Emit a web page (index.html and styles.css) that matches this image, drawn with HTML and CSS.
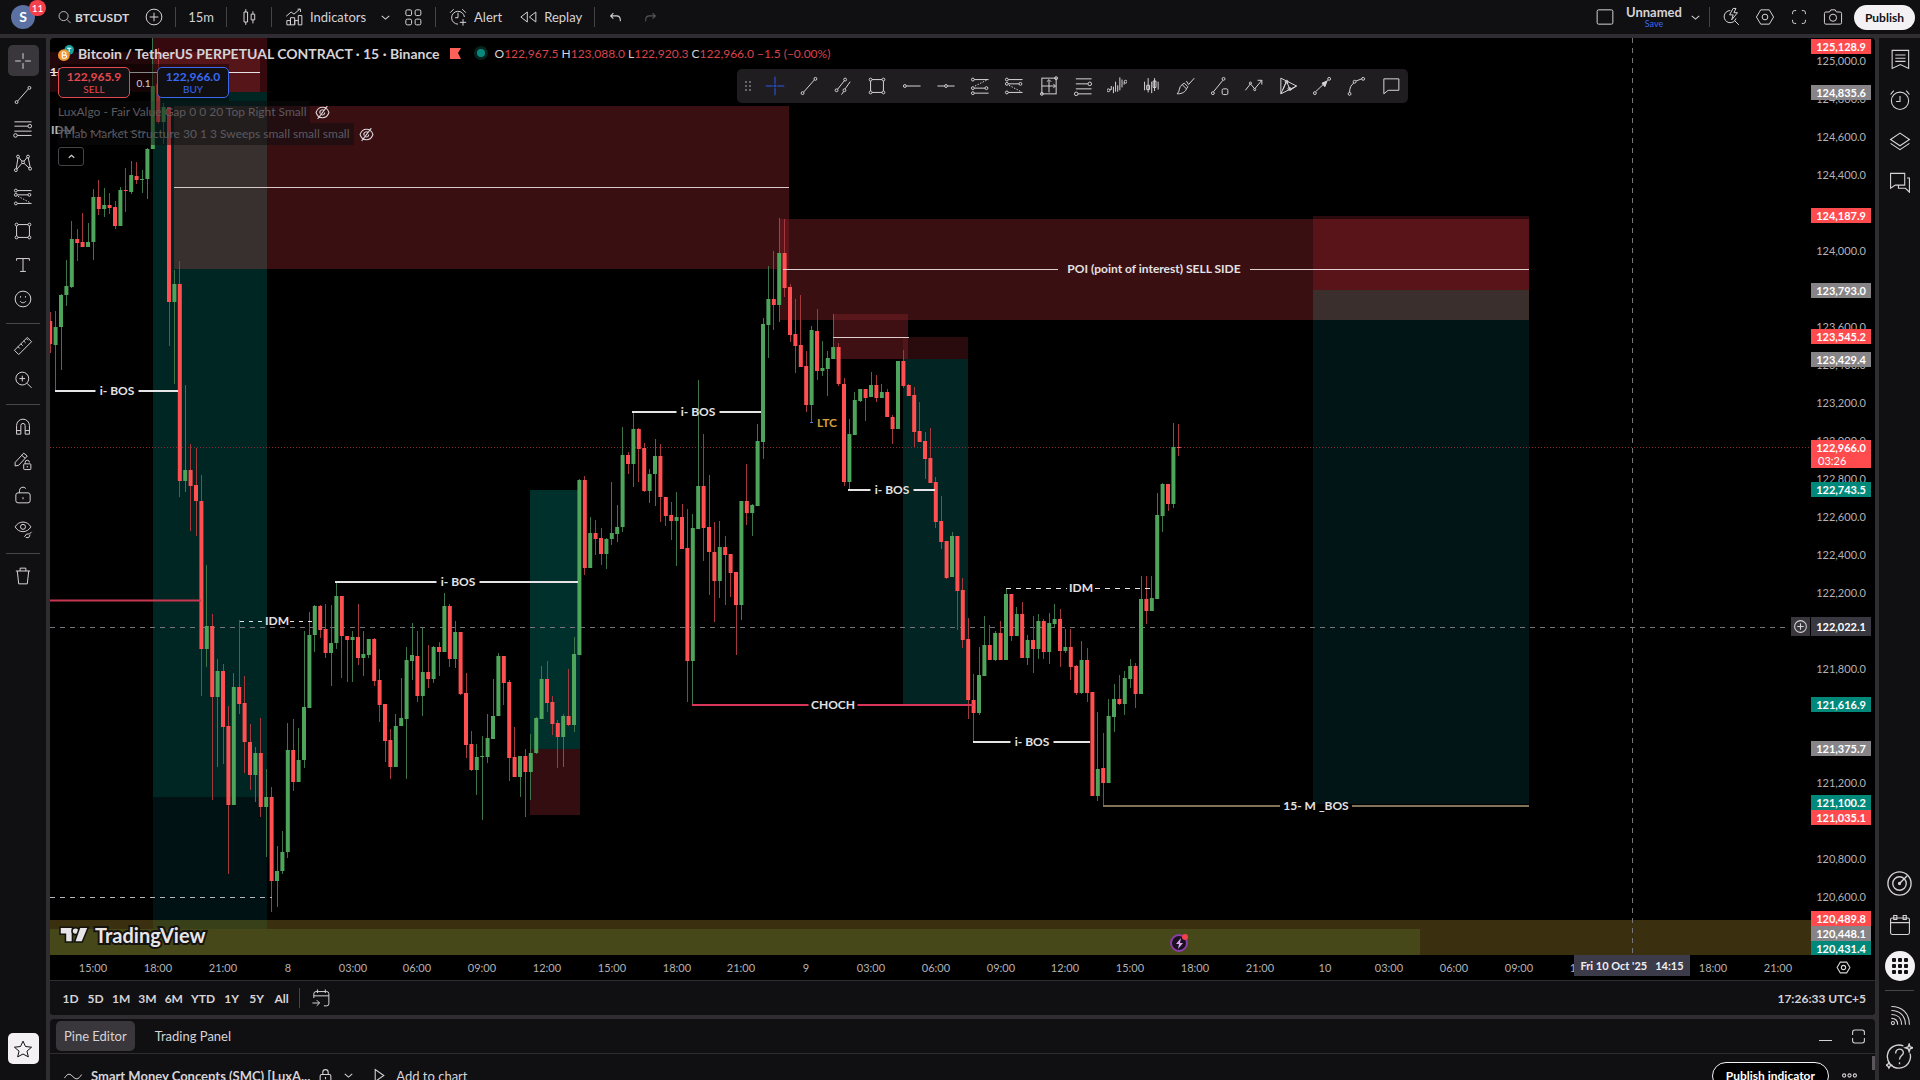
FILE: index.html
```html
<!doctype html>
<html lang="en">
    <head>
        <meta charset="utf-8">
        <title>BTCUSDT 122,966.0 Unnamed</title>
        <link rel="stylesheet" href="styles.css">
    </head>
    <body>
        <!-- icon set -->
        <svg class="sprite" aria-hidden="true">
            <symbol id="search" viewBox="0 0 28 28"><circle cx="12.500" cy="12.500" r="7.500"/><path d="M18 18l6 6"/></symbol>
            <symbol id="plus-circle" viewBox="0 0 28 28"><circle cx="14" cy="14" r="11"/><path d="M14 8v12M8 14h12"/></symbol>
            <symbol id="candles" viewBox="0 0 28 28"><path d="M7 7h5v14H7zM9.500 3v4M9.500 21v4M17 10h5v8h-5zM19.500 6v4M19.500 18v5"/></symbol>
            <symbol id="indicators" viewBox="0 0 28 28"><path d="M4 25v-6h5v6zM9 25V15h6v10zM20 25V12h5v13zM15 25v-6h5M3 13l7-6 4 3 8-7M19 3h4v4"/></symbol>
            <symbol id="chevron" viewBox="0 0 28 28"><path d="M7 11l7 6 7-6"/></symbol>
            <symbol id="grid" viewBox="0 0 28 28"><rect x="4" y="4" width="8" height="8" rx="2"/><rect x="17" y="4" width="8" height="8" rx="2"/><rect x="4" y="17" width="8" height="8" rx="2"/><rect x="17" y="17" width="8" height="8" rx="2"/></symbol>
            <symbol id="alert" viewBox="0 0 28 28"><path d="M23 14a9 9 0 1 0-9 10M14 8v7h-4M3 8l5-5M20 3l5 5M21 17v9M16.500 21.500h9"/></symbol>
            <symbol id="replay" viewBox="0 0 28 28"><path d="M13 7v14l-9-7zM25 7v14l-9-7z"/></symbol>
            <symbol id="undo" viewBox="0 0 28 28"><path d="M10 6l-5 5 5 5M5 11h11c4 0 7 3 7 8v2"/></symbol>
            <symbol id="redo" viewBox="0 0 28 28"><path d="M18 6l5 5-5 5M23 11H12c-4 0-7 3-7 8v2"/></symbol>
            <symbol id="square" viewBox="0 0 28 28"><rect x="3" y="4" width="22" height="20" rx="2"/></symbol>
            <symbol id="quick" viewBox="0 0 28 28"><path d="M13 5a8.500 8.500 0 1 0 8 11M19 19l6 6M17 2l-5 9h5l-2 7 8-10h-5l3-6z"/></symbol>
            <symbol id="hex" viewBox="0 0 28 28"><path d="M8 4h12l6 10-6 10H8L2 14z"/><circle cx="14" cy="14" r="4"/></symbol>
            <symbol id="fullscreen" viewBox="0 0 28 28"><path d="M5 10V8a3 3 0 0 1 3-3h2M18 5h2a3 3 0 0 1 3 3v2M23 18v2a3 3 0 0 1-3 3h-2M10 23H8a3 3 0 0 1-3-3v-2"/></symbol>
            <symbol id="camera" viewBox="0 0 28 28"><path d="M9 7l2-3h6l2 3h5a2 2 0 0 1 2 2v13a2 2 0 0 1-2 2H4a2 2 0 0 1-2-2V9a2 2 0 0 1 2-2z"/><circle cx="14" cy="15" r="5"/></symbol>
            <symbol id="cross" viewBox="0 0 28 28"><path d="M14 3v8M14 17v8M3 14h8M17 14h8"/></symbol>
            <symbol id="cross-full" viewBox="0 0 28 28"><path d="M14 1v10M14 17v10M1 14h10M17 14h10M14 12v4M12 14h4"/></symbol>
            <symbol id="trend" viewBox="0 0 28 28"><circle cx="5" cy="24" r="2"/><circle cx="23" cy="4" r="2"/><path d="M6.500 22.500l15-17"/></symbol>
            <symbol id="channel" viewBox="0 0 28 28"><circle cx="5" cy="20" r="2"/><circle cx="17" cy="5" r="2"/><circle cx="16" cy="20" r="2"/><path d="M6.500 18.500L16 6.500M12 26l3-4.500M17 18l7-10"/></symbol>
            <symbol id="fib" viewBox="0 0 28 28"><path d="M2 4h24M2 10h19M2 17h24M6 23h20"/><circle cx="23.500" cy="10" r="2.500"/><circle cx="3.500" cy="23" r="2.500"/></symbol>
            <symbol id="pattern" viewBox="0 0 28 28"><circle cx="4" cy="24" r="2"/><circle cx="7" cy="5" r="2"/><circle cx="14" cy="13" r="2"/><circle cx="21" cy="5" r="2"/><circle cx="24" cy="22" r="2"/><path d="M4.500 22L7 7M8.500 6.500l4 5M15.500 11.500l4-5M21.500 7L24 20M5.500 22.500l7-8M15.500 14.500l7 6.500"/></symbol>
            <symbol id="forecast" viewBox="0 0 28 28"><circle cx="4" cy="5" r="2"/><circle cx="4" cy="11" r="2"/><circle cx="23" cy="11" r="2"/><circle cx="4" cy="23" r="2"/><path d="M6 5h20M6 11h15M6 23h20"/><path stroke-dasharray="2 2" d="M7 13l17 9"/></symbol>
            <symbol id="long" viewBox="0 0 28 28"><circle cx="4" cy="5" r="2"/><circle cx="4" cy="17" r="2"/><circle cx="23" cy="17" r="2"/><circle cx="4" cy="24" r="2"/><path d="M6 5h20M6 17h15M6 24h20"/><path stroke-dasharray="2 2" d="M7 14l16-8"/></symbol>
            <symbol id="rect" viewBox="0 0 28 28"><circle cx="5" cy="5" r="2"/><circle cx="23" cy="5" r="2"/><circle cx="5" cy="23" r="2"/><circle cx="23" cy="23" r="2"/><path d="M7 5h14M7 23h14M5 7v14M23 7v14"/></symbol>
            <symbol id="text" viewBox="0 0 28 28"><path d="M5 8V5h18v3M14 5v18M10 23h8"/></symbol>
            <symbol id="smile" viewBox="0 0 28 28"><circle cx="14" cy="14" r="11"/><path d="M10 17c2 3 6 3 8 0M10.500 10v2M17.500 10v2"/></symbol>
            <symbol id="ruler" viewBox="0 0 28 28"><path d="M2 20L20 2l6 6L8 26zM7 15l2.500 2.500M11 11l2.500 2.500M15 7l2.500 2.500M19 4l2 2"/></symbol>
            <symbol id="zoom-in" viewBox="0 0 28 28"><circle cx="13" cy="12" r="9"/><path d="M13 8v8M9 12h8M19.500 18.500L26 25"/></symbol>
            <symbol id="magnet" viewBox="0 0 28 28"><path d="M5 24V12a9 9 0 0 1 18 0v12h-6V12a3 3 0 0 0-6 0v12zM5 19h6M17 19h6"/></symbol>
            <symbol id="draw-lock" viewBox="0 0 28 28"><path d="M3 16L15 3l5 4L8 20l-5 1zM12 6l5 4M17 18v-2a3 3 0 0 1 6 0"/><rect x="15" y="18" width="10" height="8" rx="1"/><path d="M20 21v2"/></symbol>
            <symbol id="unlock" viewBox="0 0 28 28"><rect x="4" y="11" width="20" height="14" rx="3"/><path d="M9 11V8a5 5 0 0 1 9-3M14 17v3"/></symbol>
            <symbol id="eye" viewBox="0 0 28 28"><path d="M3 11c5-9 17-9 22 0-5 9-17 9-22 0z"/><circle cx="14" cy="11" r="3.500"/><path d="M16 25l3-4h4l3-3M18 26h4l2-4"/></symbol>
            <symbol id="trash" viewBox="0 0 28 28"><path d="M4 7h20M10 7V3h8v4M6 7l2 18h12l2-18"/></symbol>
            <symbol id="star" viewBox="0 0 28 28"><path d="M14 3l3.500 7.500 8.500 1-6.500 5.500 2 8L14 21l-7.500 4 2-8L2 11.500l8.500-1z"/></symbol>
            <symbol id="hline" viewBox="0 0 28 28"><circle cx="4" cy="14" r="2"/><path d="M6 14h20"/></symbol>
            <symbol id="hray" viewBox="0 0 28 28"><circle cx="14" cy="14" r="2"/><path d="M2 14h10M16 14h10"/></symbol>
            <symbol id="range" viewBox="0 0 28 28"><rect x="4" y="3" width="20" height="22"/><path d="M14 6v17M4 14h19M11 8l3-3 3 3M20 11l3 3-3 3"/><circle cx="4" cy="25" r="2"/><circle cx="24" cy="3" r="2"/></symbol>
            <symbol id="retrace" viewBox="0 0 28 28"><path d="M4 4h22M4 11h17M4 18h22M7 25h19"/><circle cx="23.500" cy="11" r="2.500"/><circle cx="4.500" cy="25" r="2.500"/></symbol>
            <symbol id="ghost" viewBox="0 0 28 28"><circle cx="2" cy="20" r="2"/><circle cx="26" cy="8" r="2"/><path d="M4 19h2V14M9 24v-9M12 22V8M15 22v-9M18 20V2M21 16V5M24 12V9"/></symbol>
            <symbol id="bars" viewBox="0 0 28 28"><path d="M5 8v12M10 3v20M8 13h4v6H8zM15 8v16M19 3v18M17 7h4v9h-4zM24 8v11"/></symbol>
            <symbol id="brush" viewBox="0 0 28 28"><path d="M3 25c4-3 2-10 7-13l6 6c-2 6-9 7-13 7zM16 7l3 5L27 3M10 12l3-2 5 5-2 3"/></symbol>
            <symbol id="path" viewBox="0 0 28 28"><circle cx="4" cy="24" r="2"/><circle cx="19" cy="4" r="2"/><path d="M5 22L18 6"/><rect x="17" y="18" width="8" height="8" rx="2"/></symbol>
            <symbol id="zigzag" viewBox="0 0 28 28"><path d="M2 20l7-9 6 7L25 6M19 6h6v6"/><circle cx="9" cy="10" r="1.500"/><circle cx="15" cy="19" r="1.500"/></symbol>
            <symbol id="triangle" viewBox="0 0 28 28"><path d="M4 3v22l8-18 5 13 9-6L4 3M4 25l22-11M12 7L7 19"/><circle cx="12" cy="8" r="2"/><circle cx="16" cy="18" r="2"/></symbol>
            <symbol id="arrow" viewBox="0 0 28 28"><circle cx="4" cy="24" r="2"/><circle cx="24" cy="4" r="2"/><path d="M5 22L22 6"/><path class="solid" d="M21 7l-7 3 4 5z"/></symbol>
            <symbol id="arc" viewBox="0 0 28 28"><circle cx="5" cy="25" r="2"/><circle cx="12" cy="8" r="2"/><circle cx="24" cy="4" r="2"/><path d="M5 23c0-6 2-11 6-13M14 7l8-3"/></symbol>
            <symbol id="comment" viewBox="0 0 28 28"><path d="M4 4h21v16H10l-6 5z"/></symbol>
            <symbol id="news" viewBox="0 0 28 28"><path d="M4 3h21v23l-10.500-5L4 26zM8 9h13M8 13h13M8 17h13"/></symbol>
            <symbol id="clock" viewBox="0 0 28 28"><circle cx="14" cy="15" r="11"/><path d="M14 9v7H9M2 7l4-5M22 2l4 5"/></symbol>
            <symbol id="layers" viewBox="0 0 28 28"><path d="M2 12l12-8 12 8-12 8zM2 17l12 8 12-8"/></symbol>
            <symbol id="chats" viewBox="0 0 28 28"><path d="M2 3h18v15H8l-6 4zM23 9h3v18l-5-5h-9v-4"/></symbol>
            <symbol id="target" viewBox="0 0 28 28"><circle cx="14" cy="14" r="12"/><circle cx="14" cy="14" r="7"/><circle cx="14" cy="14" r="1"/><path d="M14 14l8-8"/></symbol>
            <symbol id="calendar" viewBox="0 0 28 28"><rect x="2" y="5" width="24" height="21" rx="2"/><path d="M2 11h24M6 2h4v5H6zM18 2h4v5h-4z"/></symbol>
            <symbol id="goto" viewBox="0 0 28 28"><path d="M4 14V8a3 3 0 0 1 3-3h15a3 3 0 0 1 3 3v14a3 3 0 0 1-3 3h-4M4 11h21M9 2v5M20 2v5M2 21h10M8 17l4 4-4 4"/></symbol>
            <symbol id="feed" viewBox="0 0 28 28"><circle cx="5" cy="23" r="2"/><path d="M3 17c5 0 8 3 8 8M3 12c8 0 13 5 13 13M3 7c11 0 18 7 18 18M3 2c14 0 23 9 23 23"/></symbol>
            <symbol id="help" viewBox="0 0 28 28"><path d="M18 3a12 12 0 1 0 7 8M10 11c0-6 8-6 8-1 0 3-4 3-4 7M14 20v2M24 1l1 3 3 1-3 1-1 3-1-3-3-1 3-1zM3 20l1 2 2 1-2 1-1 2-1-2-2-1 2-1z"/></symbol>
            <symbol id="hidden" viewBox="0 0 28 28"><path d="M2 14c4-13 20-13 24 0-4 13-20 13-24 0zM5 26L23 2M10 16a4 4 0 0 1 7-5M18 14a4 4 0 0 1-6 4"/></symbol>
            <symbol id="wave" viewBox="0 0 28 28"><path d="M2 17c5-8 8-6 12-2s7 5 12-3"/></symbol>
            <symbol id="lock" viewBox="0 0 28 28"><rect x="4" y="12" width="20" height="14" rx="3"/><path d="M9 12V8a5 5 0 0 1 10 0v4M14 17v4"/></symbol>
            <symbol id="play" viewBox="0 0 28 28"><path d="M6 3v22l16-11z"/></symbol>
            <symbol id="dots" viewBox="0 0 28 28"><circle cx="4" cy="14" r="3"/><circle cx="14" cy="14" r="3"/><circle cx="24" cy="14" r="3"/></symbol>
            <symbol id="window" viewBox="0 0 28 28"><path d="M3 11V6a4 4 0 0 1 4-4h14a4 4 0 0 1 4 4v5M25 17v5a4 4 0 0 1-4 4H7a4 4 0 0 1-4-4v-5"/></symbol>
        </svg>

        <header class="topbar">
            <a class="avatar" href="#">S<span class="badge">11</span></a>
            <button class="tool symbol"><svg class="icon"><use href="#search"/></svg>BTCUSDT</button>
            <button class="tool add" aria-label="Compare"><svg class="icon"><use href="#plus-circle"/></svg></button>
            <i class="sep"></i>
            <button class="tool">15m</button>
            <i class="sep"></i>
            <button class="tool" aria-label="Chart type"><svg class="icon"><use href="#candles"/></svg></button>
            <i class="sep"></i>
            <button class="tool near"><svg class="icon"><use href="#indicators"/></svg>Indicators</button>
            <button class="tool small" aria-label="Favorites"><svg class="icon tiny"><use href="#chevron"/></svg></button>
            <button class="tool templates" aria-label="Templates"><svg class="icon"><use href="#grid"/></svg></button>
            <i class="sep"></i>
            <button class="tool near"><svg class="icon"><use href="#alert"/></svg>Alert</button>
            <button class="tool replay"><svg class="icon"><use href="#replay"/></svg>Replay</button>
            <i class="sep"></i>
            <button class="tool undo" aria-label="Undo"><svg class="icon tiny"><use href="#undo"/></svg></button>
            <button class="tool undo off" aria-label="Redo"><svg class="icon tiny"><use href="#redo"/></svg></button>
            <div class="right">
                <button class="tool" aria-label="Layout"><svg class="icon"><use href="#square"/></svg></button>
                <button class="layout-name">Unnamed<span class="save">Save</span></button>
                <button class="tool small" aria-label="Manage layouts"><svg class="icon tiny"><use href="#chevron"/></svg></button>
                <i class="sep"></i>
                <button class="tool wide" aria-label="Quick search"><svg class="icon"><use href="#quick"/></svg></button>
                <button class="tool wide" aria-label="Settings"><svg class="icon"><use href="#hex"/></svg></button>
                <button class="tool wide" aria-label="Fullscreen"><svg class="icon"><use href="#fullscreen"/></svg></button>
                <button class="tool wide" aria-label="Snapshot"><svg class="icon"><use href="#camera"/></svg></button>
                <button class="publish">Publish</button>
            </div>
        </header>

        <nav class="drawbar">
            <button class="draw active" aria-label="Cross"><svg class="icon"><use href="#cross"/></svg></button>
            <button class="draw" aria-label="Trend line"><svg class="icon"><use href="#trend"/></svg></button>
            <button class="draw" aria-label="Fib"><svg class="icon"><use href="#fib"/></svg></button>
            <button class="draw" aria-label="Patterns"><svg class="icon"><use href="#pattern"/></svg></button>
            <button class="draw" aria-label="Forecast"><svg class="icon"><use href="#forecast"/></svg></button>
            <button class="draw" aria-label="Shapes"><svg class="icon"><use href="#rect"/></svg></button>
            <button class="draw" aria-label="Text"><svg class="icon"><use href="#text"/></svg></button>
            <button class="draw" aria-label="Icons"><svg class="icon"><use href="#smile"/></svg></button>
            <hr>
            <button class="draw" aria-label="Measure"><svg class="icon"><use href="#ruler"/></svg></button>
            <button class="draw" aria-label="Zoom in"><svg class="icon"><use href="#zoom-in"/></svg></button>
            <hr>
            <button class="draw" aria-label="Magnet"><svg class="icon"><use href="#magnet"/></svg></button>
            <button class="draw" aria-label="Stay in drawing mode"><svg class="icon"><use href="#draw-lock"/></svg></button>
            <button class="draw" aria-label="Lock drawings"><svg class="icon"><use href="#unlock"/></svg></button>
            <button class="draw" aria-label="Hide drawings"><svg class="icon"><use href="#eye"/></svg></button>
            <hr>
            <button class="draw" aria-label="Remove"><svg class="icon"><use href="#trash"/></svg></button>
            <button class="draw favs" aria-label="Favorite tools"><svg class="icon"><use href="#star"/></svg></button>
        </nav>

        <main class="center">
            <section class="chart">
                <div class="pane">
                    <svg id="plot" class="plot"></svg>
                    <div class="legend">
                        <div class="row title">
                            <svg class="coin" viewBox="0 0 30 30"><circle cx="21" cy="9" r="9" fill="#1aa0a0"/><path d="M17 6h8M21 6v7" stroke="#fff" stroke-width="2"/><circle cx="11" cy="19" r="11" fill="#f2962e"/><path d="M8 13v12M8 13h4a3 3 0 0 1 0 6H8h5a3 3 0 0 1 0 6H8" fill="none" stroke="#fff" stroke-width="2"/></svg>
                            <h1>Bitcoin / TetherUS PERPETUAL CONTRACT · 15 · Binance</h1>
                            <svg class="flag" viewBox="0 0 11 11"><path d="M0 0h11L8 5l3 6H0z" fill="#ff6057"/></svg>
                            <i class="live"></i>
                            <p class="ohlc">O<b>122,967.5</b> H<b>123,088.0</b> L<b>122,920.3</b> C<b>122,966.0</b> <b>−1.5 (−0.00%)</b></p>
                        </div>
                        <div class="row trade">
                            <button class="order sell"><strong>122,965.9</strong>SELL</button>
                            <span class="spread">0.1</span>
                            <button class="order buy"><strong>122,966.0</strong>BUY</button>
                        </div>
                        <div class="row study"><span>LuxAlgo - Fair Value Gap 0 0 20 Top Right Small</span><svg class="icon tiny"><use href="#hidden"/></svg></div>
                        <div class="row study"><span>TFlab Market Structure 30 1 3 Sweeps small small small</span><svg class="icon tiny"><use href="#hidden"/></svg></div>
                        <button class="collapse" aria-label="Collapse"><svg class="icon tiny"><use href="#chevron"/></svg></button>
                    </div>
                    <div class="favbar">
                        <span class="grip"></span>
                        <button class="fav on" aria-label="Cross"><svg class="icon"><use href="#cross-full"/></svg></button>
                        <button class="fav" aria-label="Trend line"><svg class="icon"><use href="#trend"/></svg></button>
                        <button class="fav" aria-label="Parallel channel"><svg class="icon"><use href="#channel"/></svg></button>
                        <button class="fav" aria-label="Rectangle"><svg class="icon"><use href="#rect"/></svg></button>
                        <button class="fav" aria-label="Horizontal ray"><svg class="icon"><use href="#hline"/></svg></button>
                        <button class="fav" aria-label="Horizontal line"><svg class="icon"><use href="#hray"/></svg></button>
                        <button class="fav" aria-label="Long position"><svg class="icon"><use href="#long"/></svg></button>
                        <button class="fav" aria-label="Short position"><svg class="icon"><use href="#forecast"/></svg></button>
                        <button class="fav" aria-label="Date and price range"><svg class="icon"><use href="#range"/></svg></button>
                        <button class="fav" aria-label="Fib retracement"><svg class="icon"><use href="#retrace"/></svg></button>
                        <button class="fav" aria-label="Ghost feed"><svg class="icon"><use href="#ghost"/></svg></button>
                        <button class="fav" aria-label="Bars pattern"><svg class="icon"><use href="#bars"/></svg></button>
                        <button class="fav" aria-label="Brush"><svg class="icon"><use href="#brush"/></svg></button>
                        <button class="fav" aria-label="Path"><svg class="icon"><use href="#path"/></svg></button>
                        <button class="fav" aria-label="Polyline"><svg class="icon"><use href="#zigzag"/></svg></button>
                        <button class="fav" aria-label="Triangle pattern"><svg class="icon"><use href="#triangle"/></svg></button>
                        <button class="fav" aria-label="Arrow"><svg class="icon"><use href="#arrow"/></svg></button>
                        <button class="fav" aria-label="Arc"><svg class="icon"><use href="#arc"/></svg></button>
                        <button class="fav" aria-label="Comment"><svg class="icon"><use href="#comment"/></svg></button>
                    </div>
                    <a class="brand" href="#">
                        <svg class="mark" viewBox="0 0 36 20"><path d="M1 1h14v17H8V8H1z"/><circle cx="20" cy="5" r="3.500"/><path d="M26 1h9l-7 17h-8z"/></svg>
                        TradingView
                    </a>
                    <button class="cross-add" aria-label="Add alert"><svg class="icon tiny"><use href="#plus-circle"/></svg></button>
                </div>
                <div id="prices" class="prices"></div>
                <div id="times" class="times"></div>
                <button class="axis-settings" aria-label="Axis settings"><svg class="icon tiny"><use href="#hex"/></svg></button>
                <div class="ranges">
                    <button>1D</button>
                    <button>5D</button>
                    <button>1M</button>
                    <button>3M</button>
                    <button>6M</button>
                    <button>YTD</button>
                    <button>1Y</button>
                    <button>5Y</button>
                    <button>All</button>
                    <i class="sep"></i>
                    <button aria-label="Go to"><svg class="icon"><use href="#goto"/></svg></button>
                    <button class="timezone">17:26:33 UTC+5</button>
                </div>
            </section>
            <section class="bottom">
                <div class="tabs">
                    <button class="tab current">Pine Editor</button>
                    <button class="tab">Trading Panel</button>
                    <button class="min" aria-label="Minimize"></button>
                    <button class="max" aria-label="Maximize"><svg class="icon tiny"><use href="#window"/></svg></button>
                </div>
                <div class="editor">
                    <svg class="icon"><use href="#wave"/></svg>
                    <strong>Smart Money Concepts (SMC) [LuxA...</strong>
                    <svg class="icon tiny"><use href="#lock"/></svg>
                    <svg class="icon tiny"><use href="#chevron"/></svg>
                    <button class="add-chart"><svg class="icon tiny"><use href="#play"/></svg>Add to chart</button>
                    <button class="publish-ind">Publish indicator</button>
                    <button class="more" aria-label="More"><svg class="icon tiny"><use href="#dots"/></svg></button>
                    <i class="thumb"></i>
                </div>
            </section>
        </main>

        <aside class="widgets">
            <button aria-label="Watchlist"><svg class="icon"><use href="#news"/></svg></button>
            <button aria-label="Alerts"><svg class="icon"><use href="#clock"/></svg></button>
            <button aria-label="Object tree"><svg class="icon"><use href="#layers"/></svg></button>
            <button aria-label="Chats"><svg class="icon"><use href="#chats"/></svg></button>
            <button class="push" aria-label="Screener"><svg class="icon large"><use href="#target"/></svg></button>
            <button aria-label="Calendar"><svg class="icon"><use href="#calendar"/></svg></button>
            <button aria-label="Products"><span class="apps"><i></i><i></i><i></i><i></i><i></i><i></i><i></i><i></i><i></i></span></button>
            <hr>
            <button aria-label="Feed"><svg class="icon"><use href="#feed"/></svg></button>
            <button aria-label="Help"><svg class="icon large"><use href="#help"/></svg></button>
        </aside>
        <script src="chart.js"></script>
    </body>
</html>
```
FILE: styles.css
```css
* {
    box-sizing: border-box;
}
body {
    margin: 0;
    height: 100vh;
    overflow: hidden;
    display: grid;
    grid-template-columns: 46px 1fr 41px;
    grid-template-rows: 34px 1fr;
    gap: 4px;
    background: #2f2d31;
    color: #d6d3d7;
    font-family: "Lato", "Open Sans", sans-serif;
    font-size: 14px;
}
button {
    font: inherit;
    color: inherit;
    background: none;
    border: 0;
    padding: 0;
    display: flex;
    align-items: center;
    justify-content: center;
}
a {
    color: inherit;
    text-decoration: none;
}
hr {
    width: 34px;
    height: 1px;
    margin: 6px auto;
    border: 0;
    background: #47454a;
    flex: none;
}
.sprite {
    display: none;
}
.icon {
    width: 20px;
    height: 20px;
    flex: none;
    fill: none;
    stroke: currentColor;
    stroke-width: 1.4;
}
.icon.tiny {
    width: 15px;
    height: 15px;
    stroke-width: 2;
}
.icon.large {
    width: 27px;
    height: 27px;
}
.solid {
    fill: currentColor;
}
.sep {
    width: 1px;
    height: 20px;
    background: #454348;
}

/* top bar */
.topbar {
    grid-column: 1 / -1;
    display: flex;
    align-items: center;
    background: #100f12;
    padding-left: 11px;
}
.avatar {
    position: relative;
    width: 24px;
    height: 24px;
    margin-right: 21px;
    border-radius: 50%;
    background: #5c71a3;
    color: #fff;
    text-align: center;
    line-height: 24px;
    font-weight: bold;
}
.badge {
    position: absolute;
    right: -11px;
    top: -5px;
    width: 17px;
    height: 16px;
    border-radius: 8px;
    background: #f5404c;
    font-size: 10px;
    font-weight: normal;
    line-height: 16px;
}
.tool {
    height: 34px;
    padding: 0 12px;
    gap: 6px;
    font-size: 13px;
}
.tool.symbol {
    padding: 0;
    gap: 2px;
    font-size: 12px;
    font-weight: bold;
}
.tool.symbol .icon {
    width: 17px;
}
.tool.add {
    padding: 0 11px 0 15px;
}
.tool.near {
    padding-right: 6px;
}
.tool.small {
    padding: 0 6px;
}
.tool.templates {
    padding-left: 4px;
}
.tool.replay {
    padding-left: 10px;
}
.tool.undo {
    padding: 0 12px 0 13px;
}
.tool.undo + .tool.undo {
    padding-left: 8px;
}
.tool.off {
    color: #59575c;
}
.tool.wide {
    padding: 0 7px;
}
.right {
    margin-left: auto;
    display: flex;
    align-items: center;
}
.right > .tool:first-child {
    padding: 0 11px;
}
.right .sep + .wide {
    padding-left: 11px;
}
.layout-name {
    flex-direction: column;
    font-size: 13px;
    font-weight: bold;
    line-height: 13px;
}
.save {
    color: #3a68f0;
    font-size: 9px;
    font-weight: normal;
    line-height: 10px;
}
.publish {
    height: 25px;
    margin: 0 5px 0 4px;
    padding: 0 11px;
    border-radius: 13px;
    background: #f4f1f5;
    color: #100f12;
    font-size: 12px;
    font-weight: bold;
}

/* drawing tools */
.drawbar,
.widgets {
    display: flex;
    flex-direction: column;
    align-items: center;
    background: #100f12;
}
.drawbar {
    padding: 7px 0 16px;
}
.draw {
    width: 31px;
    height: 31px;
    margin-bottom: 3px;
    border-radius: 5px;
    flex: none;
}
.draw.active {
    background: #39373c;
}
.draw.favs {
    margin-top: auto;
    margin-bottom: 0;
    background: #f4f1f5;
    color: #100f12;
}

/* right widgets */
.widgets {
    padding-bottom: 3px;
}
.widgets button {
    width: 41px;
    height: 41px;
    flex: none;
}
.widgets .icon:not(.large) {
    width: 22px;
    height: 22px;
}
.widgets .push {
    margin-top: auto;
}
.apps {
    width: 30px;
    height: 30px;
    padding: 7px;
    border-radius: 50%;
    background: #f4f1f5;
    display: grid;
    grid-template-columns: repeat(3, 4px);
    gap: 2px;
}
.apps i {
    height: 4px;
    border-radius: 1px;
    background: #100f12;
}
.widgets hr {
    width: 29px;
    margin: 4px 0;
}

/* chart */
.center {
    min-width: 0;
    display: flex;
    flex-direction: column;
    gap: 4px;
}
.chart {
    flex: 1;
    min-height: 0;
    display: grid;
    grid-template-columns: 1fr 64px;
    grid-template-rows: 1fr 25px 35px;
    background: #000;
    border-radius: 4px;
    overflow: hidden;
}
.pane {
    position: relative;
    overflow: hidden;
}
.plot {
    display: block;
    width: 100%;
    height: 100%;
}
.plot text {
    font-size: 12px;
    font-weight: bold;
    fill: #e4e2e5;
    text-anchor: middle;
    dominant-baseline: central;
}
.plot .faint {
    opacity: 0.8;
}
.legend {
    position: absolute;
    left: 8px;
    top: 4px;
    display: flex;
    flex-direction: column;
    align-items: flex-start;
}
.row {
    display: flex;
    align-items: center;
    height: 22px;
}
.title {
    gap: 4px;
}
.coin {
    width: 16px;
    height: 16px;
}
h1 {
    margin: 0;
    font-size: 14px;
    font-weight: bold;
}
.flag {
    width: 11px;
    height: 11px;
    margin: 0 12px 0 6px;
}
.live {
    width: 8px;
    height: 8px;
    margin-right: 6px;
    border-radius: 50%;
    background: #08897b;
    box-shadow: 0 0 0 3px #06231f;
}
.ohlc {
    margin: 0;
    font-size: 12px;
}
.ohlc b {
    color: #d9434c;
    font-weight: normal;
}
.trade {
    height: 37px;
    background: rgba(0, 0, 0, 0.4);
}
.order {
    flex-direction: column;
    width: 72px;
    height: 31px;
    border: 1px solid #e5484f;
    border-radius: 5px;
    background: #100f12;
    color: #e5484f;
    font-size: 10px;
    line-height: 12px;
}
.order strong {
    font-size: 12px;
}
.buy {
    border-color: #3a68f0;
    color: #3a68f0;
}
.spread {
    width: 27px;
    text-align: center;
    font-size: 10px;
}
.study {
    gap: 5px;
}
.study span {
    padding-right: 4px;
    background: rgba(12, 11, 13, 0.5);
    color: #5d5a5f;
    font-size: 12px;
    line-height: 22px;
}
.collapse {
    width: 26px;
    height: 19px;
    margin-top: 2px;
    border: 1px solid #454348;
    border-radius: 3px;
}
.collapse .icon {
    width: 11px;
    height: 11px;
    stroke-width: 3;
    transform: rotate(180deg);
}
.favbar {
    position: absolute;
    left: 39%;
    top: 31px;
    width: 671px;
    height: 34px;
    display: flex;
    align-items: center;
    border-radius: 5px;
    background: #1f1d20;
}
.grip {
    width: 8px;
    height: 13px;
    margin: 0 6px 0 7px;
    background: radial-gradient(circle, #67656a 1px, transparent 1px) 0 0 / 4px 4px;
}
.fav {
    flex: 1;
    height: 34px;
}
.fav.on {
    color: #2f5bea;
}
.brand {
    position: absolute;
    left: 10px;
    bottom: 6px;
    display: flex;
    align-items: center;
    gap: 7px;
    color: #e8e5e9;
    font-size: 20px;
    font-weight: bold;
    line-height: 28px;
    -webkit-text-stroke: 4px #14130f;
    paint-order: stroke fill;
}
.mark {
    width: 28px;
    height: 16px;
    overflow: visible;
    fill: #e8e5e9;
    stroke: #14130f;
    stroke-width: 4px;
    paint-order: stroke fill;
}
.cross-add {
    position: absolute;
    right: 1px;
    top: 579px;
    width: 19px;
    height: 19px;
    background: #39373c;
}
.prices,
.times {
    position: relative;
    overflow: hidden;
    color: #b4b2b5;
    font-size: 11px;
}
.price,
.tag {
    position: absolute;
    left: 0;
    width: 60px;
    height: 15px;
    padding-right: 5px;
    text-align: right;
    line-height: 15px;
}
.tag {
    color: #fff;
    font-weight: bold;
}
.tag small {
    display: block;
    padding-left: 7px;
    text-align: left;
    font-size: 11px;
    font-weight: normal;
    line-height: 12px;
}
.tag.red {
    background: #ff4a4e;
}
.tag.last {
    height: 28px;
}
.tag.gray {
    background: #868487;
}
.tag.teal {
    background: #00897b;
}
.tag.cursor {
    height: 19px;
    background: #39373f;
    line-height: 19px;
}
.times {
    overflow: visible;
}
.times span {
    position: absolute;
    width: 60px;
    margin-left: -30px;
    text-align: center;
    line-height: 25px;
}
.times .cursor {
    width: 116px;
    margin-left: -58px;
    background: #3b3b49;
    color: #f0eef1;
    font-weight: bold;
    line-height: 21px;
    white-space: pre;
}
.ranges {
    grid-column: 1 / -1;
    display: flex;
    align-items: center;
    padding: 0 9px 0 8px;
    border-top: 1px solid #2f2d31;
    background: #100f12;
    font-size: 12px;
    font-weight: bold;
}
.ranges button {
    padding: 0 4px;
    min-width: 25px;
}
.ranges .sep {
    margin: 0 7px 0 5px;
}
.ranges .timezone {
    margin-left: auto;
    padding: 0;
}

/* bottom panel */
.bottom {
    flex: none;
    height: 61px;
    overflow: hidden;
    background: #100f12;
    border-radius: 4px 4px 0 0;
}
.tabs {
    display: flex;
    align-items: center;
    height: 35px;
    padding: 0 9px 0 6px;
    border-bottom: 1px solid #2f2d31;
}
.tab {
    height: 30px;
    padding: 0 8px;
    border-radius: 5px;
    font-size: 13px;
}
.tab + .tab {
    margin-left: 12px;
}
.current {
    background: #39373c;
}
.min {
    width: 13px;
    height: 10px;
    margin: 0 19px 0 auto;
    border-bottom: 1px solid #d6d3d7;
}
.editor {
    display: flex;
    align-items: center;
    gap: 8px;
    height: 43px;
    padding-left: 13px;
}
.editor strong {
    font-size: 13px;
}
.add-chart {
    gap: 9px;
    margin-left: 8px;
    font-size: 13px;
}
.publish-ind {
    height: 28px;
    margin-left: auto;
    padding: 0 13px;
    border: 1px solid #f4f1f5;
    border-radius: 14px;
    background: #000;
    color: #fff;
    font-size: 12px;
    font-weight: bold;
}
.more {
    margin-left: 4px;
}
.more .icon {
    width: 17px;
}
.thumb {
    width: 3px;
    height: 14px;
    align-self: flex-start;
    margin: 2px 0 0 6px;
    background: #59575c;
}
```
FILE: chart.js
```js
const NS = "http://www.w3.org/2000/svg";
const plot = document.getElementById("plot");

// window position of the pane, the drawings below are stored in window pixels
const LEFT = 50;
const TOP = 38;
const STEP = 5.4;

const root = add("g", { transform: `translate(${-LEFT} ${-TOP})` }, plot);

function add(name, attrs, parent = root) {
    const el = document.createElementNS(NS, name);
    for (const key in attrs) el.setAttribute(key, attrs[key]);
    parent.appendChild(el);
    return el;
}

// x1, y1, x2, y2, fill
const zones = [
    [153, 38, 267, 92, "#35090d"],
    [50, 52, 153, 92, "#23080b"],
    [153, 52, 260, 92, "#561519"],
    [153, 92, 267, 797, "#002623"],
    [153, 797, 267, 929, "#011214"],
    [174, 106, 789, 269, "#390f12"],
    [174, 106, 267, 269, "#38302e"],
    [530, 490, 580, 749, "#00302b"],
    [530, 749, 580, 815, "#330d10"],
    [780, 219, 1529, 320, "#390f12"],
    [780, 219, 789, 269, "#591519"],
    [834, 314, 908, 359, "#3e1013"],
    [834, 314, 908, 320, "#5a171b"],
    [903, 337, 968, 359, "#290b0d"],
    [903, 337, 908, 359, "#52151a"],
    [903, 359, 968, 704, "#022422"],
    [1313, 216, 1529, 290, "#591419"],
    [1313, 216, 1529, 219, "#2a0a0c"],
    [1313, 290, 1529, 320, "#3a2f2d"],
    [1313, 320, 1529, 804, "#011416"],
    [50, 920, 1811, 955, "#3a3010"],
    [153, 920, 267, 929, "#38401a"],
    [50, 929, 1420, 955, "#474819"],
];
for (const [x1, y1, x2, y2, fill] of zones) {
    add("rect", { x: x1, y: y1, width: x2 - x1, height: y2 - y1, fill });
}

// crosshair and last price line
add("path", { d: "M50 627.5H1790M1632.5 38V955", stroke: "#77757a", "stroke-dasharray": "5 5" });
add("path", { d: "M50 447.5H1811", stroke: "#8c2a33", "stroke-dasharray": "1 2" });

// direction, high, body top, body bottom, low
const candles = `
r 312 321 344 353|g 311 327 345 391|g 294 295 327 370|g 260 286 295 306|g 221 239 287 288|r 229 239 243 261
r 213 242 247 247|g 223 242 247 247|g 189 197 242 260|r 180 197 209 215|g 188 205 209 217|r 193 205 208 214
r 201 207 226 229|g 187 190 226 226|r 168 190 191 212|g 161 175 192 194|r 162 176 180 184|g 170 179 180 193
g 148 149 179 199|g 38 86 149 149|r 48 84 122 124|g 103 107 122 144|r 107 107 302 346|g 270 284 302 384
r 261 284 481 497|g 385 470 481 492|r 444 470 486 531|r 448 485 501 536|r 475 501 649 696|g 565 626 649 667
r 614 626 697 800|g 659 671 697 767|r 664 671 727 764|r 706 726 805 874|g 673 687 805 805|r 620 687 704 714
r 676 703 742 773|r 724 742 775 790|g 747 753 775 802|r 718 753 807 817|g 769 797 807 857|r 787 797 881 912
g 846 871 881 907|g 831 852 871 874|g 723 750 852 858|r 719 750 782 791|g 728 760 782 782|g 631 707 760 768
g 612 635 708 708|g 605 606 635 652|r 605 606 630 638|r 604 629 653 658|g 605 643 653 686|g 583 596 643 649
r 596 596 636 678|r 636 636 640 682|g 631 637 640 682|r 604 637 658 665|g 631 654 658 676|g 639 639 655 658
r 638 639 681 686|r 669 680 705 722|r 704 704 741 762|r 729 740 767 779|g 714 726 767 767|g 678 718 726 726
g 647 660 719 779|g 623 655 661 680|r 631 656 696 702|g 628 672 696 716|r 645 672 679 688|g 646 647 679 683
r 642 647 652 676|g 593 606 652 652|r 604 606 659 667|g 621 632 659 668|r 632 632 694 695|r 673 693 745 758
r 731 744 770 771|g 744 757 770 795|g 736 756 757 820|g 714 738 757 763|g 679 716 739 739|g 653 656 716 716
r 656 656 683 705|r 680 682 758 781|r 727 757 777 777|g 756 756 777 797|r 749 756 772 817|g 734 753 772 800
g 717 718 753 754|g 666 679 719 719|r 661 679 703 712|r 696 702 724 735|r 720 723 737 768|g 714 716 737 767
r 669 716 725 726|g 637 654 725 732|g 479 480 655 655|r 476 480 568 575|g 517 533 568 568|r 520 533 539 555
r 528 538 554 565|g 538 539 554 569|g 482 533 539 545|g 505 527 534 542|g 427 455 527 532|r 452 455 464 474
g 412 429 464 487|r 428 429 449 482|r 443 448 491 492|g 469 474 491 503|g 439 456 474 506|r 444 456 497 522
r 497 497 516 526|r 502 515 521 540|g 492 517 521 566|r 504 517 549 549|r 509 548 661 702|g 514 528 661 705
g 380 486 529 529|r 434 486 528 561|r 475 527 552 595|r 522 552 581 622|g 521 547 581 598|r 536 547 555 605
r 554 554 573 597|r 572 572 605 655|g 501 501 605 620|r 464 501 513 525|g 504 505 513 536|g 424 441 506 506
g 318 324 442 459|g 266 299 325 358|r 251 299 305 330|g 218 253 305 322|r 219 253 288 297|r 284 287 335 342
r 299 334 346 373|r 295 345 367 367|r 351 366 405 412|g 326 330 405 422|r 309 331 371 380|g 341 368 371 376
g 351 358 369 396|g 314 347 359 359|r 343 347 384 386|r 378 384 482 486|g 419 434 482 490|g 392 400 435 435
g 389 389 401 402|r 389 389 398 421|g 372 385 397 397|r 375 385 398 402|g 384 392 398 398|r 389 392 417 417
r 415 417 429 444|g 361 361 429 429|r 350 361 386 388|r 384 385 396 396|r 387 395 432 447|r 402 431 442 442
r 432 441 459 479|r 428 458 483 483|r 477 482 522 528|r 496 521 542 549|r 541 541 578 579|g 532 536 577 577
r 536 536 591 630|r 578 590 640 648|r 618 639 700 719|r 674 700 713 742|g 647 675 713 715|g 616 645 676 676
r 625 645 660 660|g 631 633 660 661|r 621 633 660 660|g 588 594 660 660|r 594 594 636 641|g 607 614 636 636
r 602 614 658 658|g 635 640 658 665|r 616 640 649 673|g 614 621 649 659|r 619 621 652 659|g 613 623 652 664
g 604 619 624 627|r 609 619 651 667|g 629 647 651 653|r 629 647 667 680|r 665 666 693 695|g 641 660 693 694
r 648 660 693 702|r 692 692 796 796|g 712 769 796 801|r 733 768 783 806|g 699 716 783 783|g 684 699 717 732
r 675 699 704 705|g 671 678 704 715|g 659 666 679 688|r 663 666 694 708|g 576 599 694 694|r 576 599 611 624
g 576 598 611 611|g 493 515 599 599|g 483 484 516 532|r 484 484 504 511|g 423 447 504 508|r 424 447 448 456
`.trim().split(/[|\n]/);

const colors = { r: ["#ff4f50", "#a3393c"], g: ["#4ea45a", "#3d7449"] };
candles.forEach((candle, i) => {
    const [dir, high, top, bottom, low] = candle.split(" ");
    const x = 50.2 + STEP * i;
    const [body, wick] = colors[dir];
    add("rect", { x: Math.round(x - 0.5), y: high, width: 1, height: low - high, fill: wick });
    add("rect", { x: x - 2, y: top, width: 4, height: Math.max(1, bottom - top), fill: body });
});

// x1, x2, y, label, gap around the label, label center, color, width, dash
const white = "#e6e4e7";
const lines = [
    [50, 260, 72.5, "", 0, 0, white, 1, ""],
    [174, 789, 187.5, "", 0, 0, "#d8c9ca", 1, ""],
    [55, 178, 391, "i- BOS", 43, 117, white, 2, ""],
    [50, 201, 600.5, "", 0, 0, "#c93650", 2, ""],
    [240, 313, 621.5, "IDM", 26, 277, white, 1, "4 5"],
    [335, 578, 582, "i- BOS", 43, 458, white, 2, ""],
    [50, 272, 897.5, "", 0, 0, "#b9b7ba", 1, "5 5"],
    [632, 761, 412, "i- BOS", 43, 698, white, 2, ""],
    [848, 935, 490, "i- BOS", 43, 892, white, 2, ""],
    [692, 973, 705, "CHOCH", 49, 833, "#d9365a", 2, ""],
    [1006, 1155, 588.5, "IDM", 28, 1081, white, 1, "5 5"],
    [973, 1090, 742, "i- BOS", 43, 1032, white, 2, ""],
    [1103, 1529, 806, "15- M _BOS", 72, 1316, "#82745a", 2, ""],
    [783, 1529, 269.5, "POI (point of interest) SELL SIDE", 192, 1154, "#e0cfd0", 1, ""],
    [833, 909, 337.5, "", 0, 0, "#e0cfd0", 1, ""],
];
for (const [x1, x2, y, label, gap, cx, color, width, dash] of lines) {
    const d = label
        ? `M${x1} ${y}H${cx - gap / 2}M${cx + gap / 2} ${y}H${x2}`
        : `M${x1} ${y}H${x2}`;
    add("path", { d, stroke: color, "stroke-width": width, "stroke-dasharray": dash || "none" });
    if (label) add("text", { x: cx, y: y - 1 }).textContent = label;
}
add("text", { x: 63, y: 129, class: "faint" }).textContent = "IDM";
add("path", { d: "M80 131.5H146", stroke: "#69676b", "stroke-dasharray": "5 5" });
add("text", { x: 57, y: 71 }).textContent = "15";
add("text", { x: 827, y: 422, style: "fill: #d99c3c" }).textContent = "LTC";
add("path", { d: "M810 422.5H813", stroke: "#4d79d6" });

// economic event marker under the last bar
add("circle", { cx: 1179, cy: 943, r: 8, fill: "#1b1022", stroke: "#8a3fa8", "stroke-width": 2 });
add("path", { d: "M1181 938l-5 6h3l-1 5 5-6h-3z", fill: "#d9a7ea" });
add("circle", { cx: 1185, cy: 937, r: 3, fill: "#f5404c" });

// price axis
const prices = document.getElementById("prices");
const money = (n) => n.toLocaleString("en-US", { minimumFractionDigits: 1 });
function priceLabel(text, top, cls) {
    const el = document.createElement("div");
    el.className = cls;
    el.style.top = `${top}px`;
    el.textContent = text;
    prices.appendChild(el);
    return el;
}
for (let p = 125000; p >= 120600; p -= 200) {
    if (p === 122000 || p === 121000 || p === 124200 || p === 123800 || p === 121600) continue;
    priceLabel(money(p), Math.round((125000 - p) * 0.19) + 15, "price");
}
[
    [125128.9, 1, "red"],
    [124835.6, 47, "gray"],
    [124187.9, 170, "red"],
    [123793, 245, "gray"],
    [123545.2, 291, "red"],
    [123429.4, 314, "gray"],
    [122743.5, 444, "teal"],
    [122022.1, 579, "cursor"],
    [121616.9, 659, "teal"],
    [121375.7, 703, "gray"],
    [121100.2, 757, "teal"],
    [121035.1, 772, "red"],
    [120489.8, 873, "red"],
    [120448.1, 888, "gray"],
    [120431.4, 903, "teal"],
].forEach(([p, top, cls]) => priceLabel(money(p), top, `tag ${cls}`));
const last = priceLabel(money(122966), 402, "tag red last");
const countdown = document.createElement("small");
countdown.textContent = "03:26";
last.appendChild(countdown);

// time axis, one label every twelve bars
const times = document.getElementById("times");
const hours = "15:00 18:00 21:00 8 03:00 06:00 09:00 12:00 15:00 18:00 21:00 9 03:00 06:00 09:00 12:00 15:00 18:00 21:00 10 03:00 06:00 09:00 12:00 15:00 18:00 21:00";
function timeLabel(text, x, cls) {
    const el = document.createElement("span");
    el.className = cls;
    el.style.left = `${x}px`;
    el.textContent = text;
    times.appendChild(el);
}
hours.split(" ").forEach((hour, i) => {
    if (i !== 24) timeLabel(hour, Math.round(43.3 + STEP * 12 * i), "");
});
timeLabel("Fri 10 Oct '25   14:15", 1582, "cursor");
```
